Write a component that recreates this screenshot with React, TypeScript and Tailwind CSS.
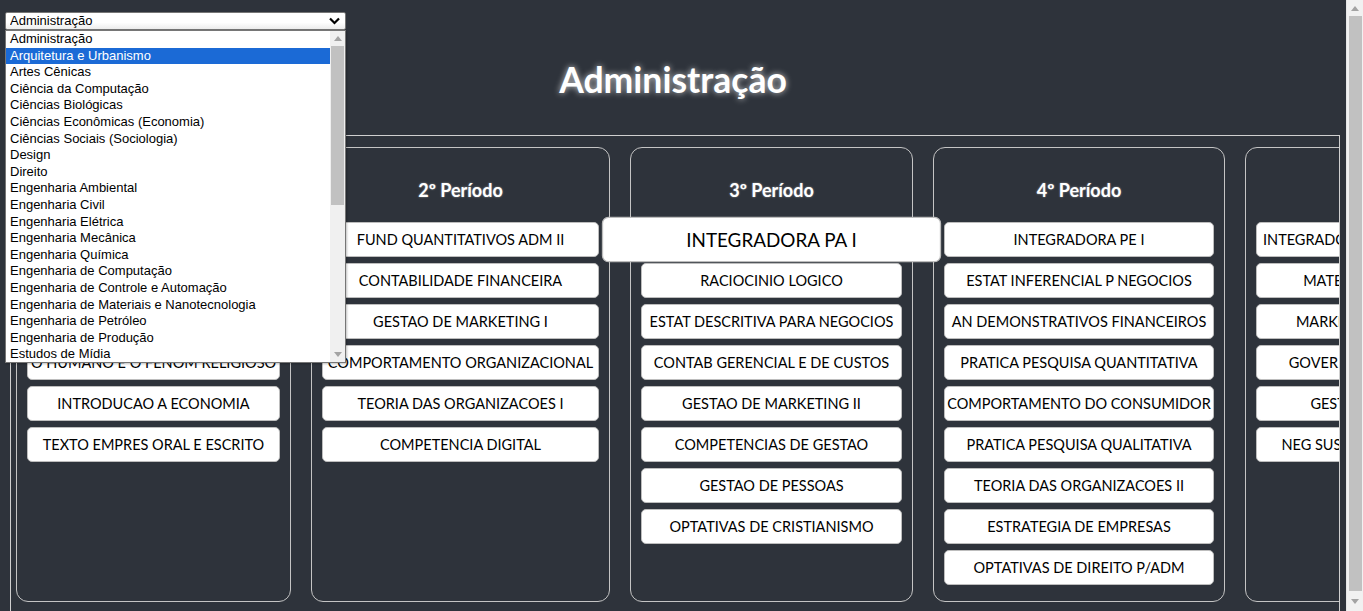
import { useState } from "react";

type Periodo = {
  titulo: string;
  largura: string;
  disciplinas: string[];
};

const cursos = [
  "Administração",
  "Arquitetura e Urbanismo",
  "Artes Cênicas",
  "Ciência da Computação",
  "Ciências Biológicas",
  "Ciências Econômicas (Economia)",
  "Ciências Sociais (Sociologia)",
  "Design",
  "Direito",
  "Engenharia Ambiental",
  "Engenharia Civil",
  "Engenharia Elétrica",
  "Engenharia Mecânica",
  "Engenharia Química",
  "Engenharia de Computação",
  "Engenharia de Controle e Automação",
  "Engenharia de Materiais e Nanotecnologia",
  "Engenharia de Petróleo",
  "Engenharia de Produção",
  "Estudos de Mídia",
];

const periodos: Periodo[] = [
  {
    titulo: "1º Período",
    largura: "w-[275px]",
    disciplinas: [
      "FUND QUANTITATIVOS ADM I",
      "FUND DA ADMINISTRACAO",
      "MATEMATICA APLICADA",
      "O HUMANO E O FENOM RELIGIOSO",
      "INTRODUCAO A ECONOMIA",
      "TEXTO EMPRES ORAL E ESCRITO",
    ],
  },
  {
    titulo: "2º Período",
    largura: "w-[299px]",
    disciplinas: [
      "FUND QUANTITATIVOS ADM II",
      "CONTABILIDADE FINANCEIRA",
      "GESTAO DE MARKETING I",
      "COMPORTAMENTO ORGANIZACIONAL",
      "TEORIA DAS ORGANIZACOES I",
      "COMPETENCIA DIGITAL",
    ],
  },
  {
    titulo: "3º Período",
    largura: "w-[283px]",
    disciplinas: [
      "INTEGRADORA PA I",
      "RACIOCINIO LOGICO",
      "ESTAT DESCRITIVA PARA NEGOCIOS",
      "CONTAB GERENCIAL E DE CUSTOS",
      "GESTAO DE MARKETING II",
      "COMPETENCIAS DE GESTAO",
      "GESTAO DE PESSOAS",
      "OPTATIVAS DE CRISTIANISMO",
    ],
  },
  {
    titulo: "4º Período",
    largura: "w-[292px]",
    disciplinas: [
      "INTEGRADORA PE I",
      "ESTAT INFERENCIAL P NEGOCIOS",
      "AN DEMONSTRATIVOS FINANCEIROS",
      "PRATICA PESQUISA QUANTITATIVA",
      "COMPORTAMENTO DO CONSUMIDOR",
      "PRATICA PESQUISA QUALITATIVA",
      "TEORIA DAS ORGANIZACOES II",
      "ESTRATEGIA DE EMPRESAS",
      "OPTATIVAS DE DIREITO P/ADM",
    ],
  },
  {
    titulo: "5º Período",
    largura: "w-auto",
    disciplinas: [
      "INTEGRADORA PA II E EMPREENDEDOR",
      "MATEMATICA FINANCEIRA I",
      "MARKETING INTERNACIONAL",
      "GOVER CORPORATIVA E RISCOS",
      "GESTAO DE OPERACOES I",
      "NEG SUSTENTAVEIS E INOVACOES",
    ],
  },
];

function Triangle({ up }: { up?: boolean }) {
  return (
    <svg width="8" height="5" viewBox="0 0 8 5" className="fill-[#a3a3a3]">
      {up ? <path d="M0 5 L4 0 L8 5 Z" /> : <path d="M0 0 L8 0 L4 5 Z" />}
    </svg>
  );
}

export default function App() {
  const [curso, setCurso] = useState("Administração");
  const hovered = "INTEGRADORA PA I";

  return (
    <div className="flex h-[611px] w-full overflow-hidden bg-[#2e333b] font-['Lato',sans-serif]">
      <div className="relative flex min-w-0 flex-1 flex-col">
        <div className="pl-[5px] pt-[12px]">
          <div className="flex h-[18px] w-[341px] items-center rounded-[2px] border border-[#767676] bg-gradient-to-b from-white from-60% to-[#ececec] pr-[5px] font-['Liberation_Sans',Arial,sans-serif]">
            <select
              value={curso}
              onChange={(e) => setCurso(e.target.value)}
              className="h-full min-w-0 flex-1 appearance-none bg-transparent pl-[4px] text-[13px] leading-[16px] text-black outline-none"
            >
              {cursos.map((c) => (
                <option key={c} value={c}>
                  {c}
                </option>
              ))}
            </select>
            <svg width="11" height="8" viewBox="0 0 11 8" className="stroke-black" fill="none">
              <path d="M1 1.5 L5.5 6 L10 1.5" strokeWidth="2.2" />
            </svg>
          </div>
        </div>

        {/* lista aberta do select */}
        <div className="absolute left-[5px] top-[30px] z-20 flex h-[333px] w-[341px] border border-[#767676] bg-white font-['Liberation_Sans',Arial,sans-serif] shadow-[1px_1px_2px_rgba(0,0,0,0.25)]">
          <ul className="min-w-0 flex-1">
            {cursos.map((c, i) => (
              <li
                key={c}
                className={
                  i === 1
                    ? "h-[16.6px] bg-[#1b6ad6] pl-[4px] text-[13px] leading-[16.6px] text-white"
                    : "h-[16.6px] pl-[4px] text-[13px] leading-[16.6px] text-black"
                }
              >
                {c}
              </li>
            ))}
          </ul>
          <div className="flex w-[15px] flex-col items-center bg-[#f0f0f0]">
            <div className="flex h-[15px] items-center justify-center">
              <Triangle up />
            </div>
            <div className="h-[159px] w-[13px] bg-[#c1c1c1]" />
            <div className="flex-1" />
            <div className="flex h-[15px] items-center justify-center">
              <Triangle />
            </div>
          </div>
        </div>

        <h1 className="mt-[29px] text-center text-[35.5px] font-bold leading-[42px] text-white [text-shadow:0_0_6px_rgba(255,255,255,0.75)]">
          {curso}
        </h1>

        <div className="ml-[10px] mr-[6px] mt-[34px] flex flex-1 gap-[20px] overflow-hidden border border-b-0 border-[#cfcfcf] pl-[5px] pt-[11px]">
          {periodos.map((p) => (
            <section
              key={p.titulo}
              className={`${p.largura} flex h-[455px] flex-none flex-col rounded-[12px] border border-[#c4c4c4] px-[10px] pb-[16px] pt-[30px]`}
            >
              <h2 className="mb-[20px] text-center text-[18px] font-bold leading-[24px] text-white [text-shadow:0_0_2px_rgba(255,255,255,0.5)]">
                {p.titulo}
              </h2>
              <div className="flex flex-col gap-[6px]">
                {p.disciplinas.map((d) => (
                  <div
                    key={d}
                    className={
                      d === hovered
                        ? "relative z-10 flex h-[35px] scale-[1.3] items-center justify-center whitespace-nowrap rounded-[5px] border border-[#bdbdbd] bg-white px-[6px] text-[14.5px] text-black"
                        : "flex h-[35px] items-center justify-center whitespace-nowrap rounded-[5px] border border-[#bdbdbd] bg-white px-[6px] text-[14.5px] text-black"
                    }
                  >
                    {d}
                  </div>
                ))}
              </div>
            </section>
          ))}
        </div>
      </div>

      {/* barra de rolagem da página */}
      <div className="flex w-[17px] flex-none flex-col items-center border-l border-[#e6e6e6] bg-[#f1f1f1]">
        <div className="flex h-[16px] items-center justify-center">
          <Triangle up />
        </div>
        <div className="w-[13px] flex-1 bg-[#c1c1c1]" />
        <div className="flex h-[20px] items-center justify-center">
          <Triangle />
        </div>
      </div>
    </div>
  );
}
